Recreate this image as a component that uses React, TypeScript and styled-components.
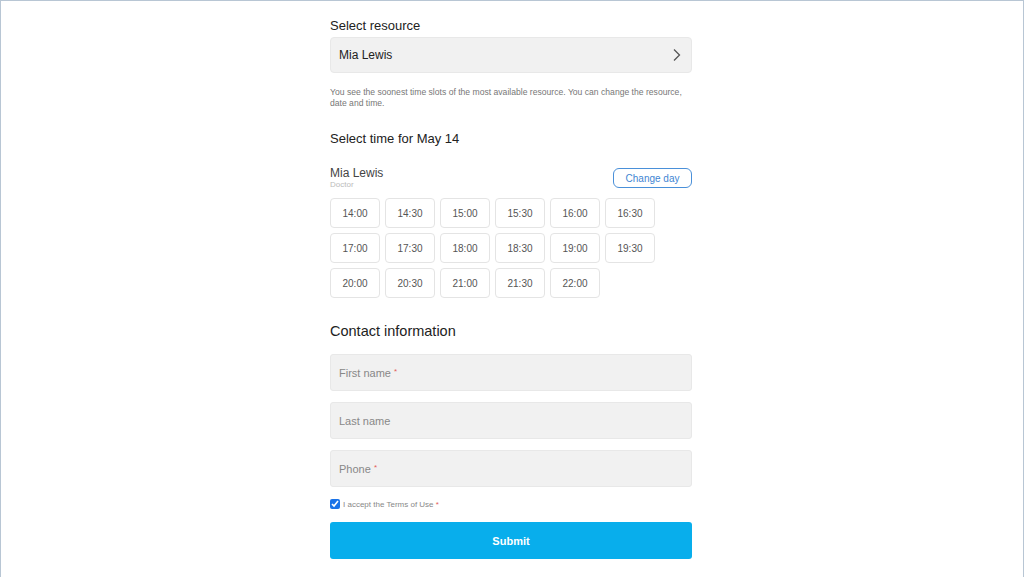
import styled, { createGlobalStyle } from "styled-components";

const GlobalStyle = createGlobalStyle`
  html, body {
    margin: 0;
    padding: 0;
    background: #ffffff;
    font-family: "Liberation Sans", Arial, sans-serif;
  }
  * { box-sizing: border-box; }
`;

const slots = [
  "14:00", "14:30", "15:00", "15:30", "16:00", "16:30",
  "17:00", "17:30", "18:00", "18:30", "19:00", "19:30",
  "20:00", "20:30", "21:00", "21:30", "22:00",
];

const App = () => {
  return (
    <Frame>
      <GlobalStyle />
      <Column>
        <Heading>Select resource</Heading>
        <SelectBox>
          <span>Mia Lewis</span>
          <svg width="10" height="14" viewBox="0 0 10 14">
            <path d="M2 1.5 L7.5 7 L2 12.5" fill="none" stroke="#555" strokeWidth="1.3" />
          </svg>
        </SelectBox>
        <Hint>
          You see the soonest time slots of the most available resource. You can change the resource,
          date and time.
        </Hint>

        <Heading $top={22}>Select time for May 14</Heading>
        <ResourceRow>
          <div>
            <ResourceName>Mia Lewis</ResourceName>
            <ResourceRole>Doctor</ResourceRole>
          </div>
          <OutlineButton>Change day</OutlineButton>
        </ResourceRow>
        <SlotGrid>
          {slots.map((s) => (
            <Slot key={s}>{s}</Slot>
          ))}
        </SlotGrid>

        <SectionTitle>Contact information</SectionTitle>
        <Fields>
          <Field>
            <span>
              First name <Req>*</Req>
            </span>
          </Field>
          <Field>
            <span>Last name</span>
          </Field>
          <Field>
            <span>
              Phone <Req>*</Req>
            </span>
          </Field>
        </Fields>
        <Terms>
          <input type="checkbox" defaultChecked />
          <span>
            I accept the Terms of Use <Req>*</Req>
          </span>
        </Terms>
        <Submit>Submit</Submit>
      </Column>
    </Frame>
  );
};

const Frame = styled.div`
  height: 577px;
  border: 1px solid #b8c6d4;
  border-bottom: none;
  overflow: hidden;
`;

const Column = styled.div`
  width: 362px;
  margin: 0 auto;
  padding-top: 17px;
  display: flex;
  flex-direction: column;
  transform: translateX(-1px);
`;

const Heading = styled.div<{ $top?: number }>`
  font-size: 13px;
  line-height: 16px;
  color: #222;
  margin-top: ${(p) => p.$top ?? 0}px;
`;

const SelectBox = styled.div`
  margin-top: 3px;
  height: 36px;
  background: #f1f1f1;
  border: 1px solid #e8e8e8;
  border-radius: 4px;
  display: flex;
  align-items: center;
  justify-content: space-between;
  padding: 0 9px 0 8px;
  font-size: 12px;
  color: #222;
`;

const Hint = styled.div`
  margin-top: 14px;
  font-size: 8.6px;
  line-height: 11px;
  color: #777;
`;

const ResourceRow = styled.div`
  margin-top: 19px;
  display: flex;
  justify-content: space-between;
  align-items: flex-end;
`;

const ResourceName = styled.div`
  font-size: 12px;
  line-height: 14px;
  color: #444;
`;

const ResourceRole = styled.div`
  font-size: 8px;
  line-height: 10px;
  color: #bbb;
`;

const OutlineButton = styled.div`
  width: 79px;
  height: 20px;
  border: 1px solid #4a90d9;
  border-radius: 6px;
  color: #3f86d3;
  font-size: 10px;
  display: flex;
  align-items: center;
  justify-content: center;
  margin-bottom: 2px;
`;

const SlotGrid = styled.div`
  margin-top: 8px;
  display: grid;
  grid-template-columns: repeat(6, 50px);
  gap: 5px;
`;

const Slot = styled.div`
  height: 30px;
  border: 1px solid #e4e4e4;
  border-radius: 4px;
  display: flex;
  align-items: center;
  justify-content: center;
  font-size: 10px;
  color: #555;
`;

const SectionTitle = styled.div`
  margin-top: 24px;
  font-size: 14.5px;
  line-height: 18px;
  color: #222;
`;

const Fields = styled.div`
  margin-top: 14px;
  display: flex;
  flex-direction: column;
  gap: 11px;
`;

const Field = styled.div`
  height: 37px;
  background: #f1f1f1;
  border: 1px solid #e8e8e8;
  border-radius: 3px;
  display: flex;
  align-items: center;
  padding-left: 8px;
  font-size: 11px;
  color: #888;
`;

const Req = styled.span`
  color: #e35b5b;
  font-size: 8px;
  vertical-align: top;
`;

const Terms = styled.label`
  margin-top: 12px;
  display: flex;
  align-items: center;
  gap: 3px;
  font-size: 8px;
  color: #888;
  input {
    margin: 0;
    width: 10px;
    height: 10px;
    accent-color: #1a73e8;
  }
`;

const Submit = styled.div`
  margin-top: 13px;
  height: 37px;
  background: #08aeec;
  border-radius: 3px;
  color: #fff;
  font-weight: bold;
  font-size: 11px;
  display: flex;
  align-items: center;
  justify-content: center;
`;

export default App;
